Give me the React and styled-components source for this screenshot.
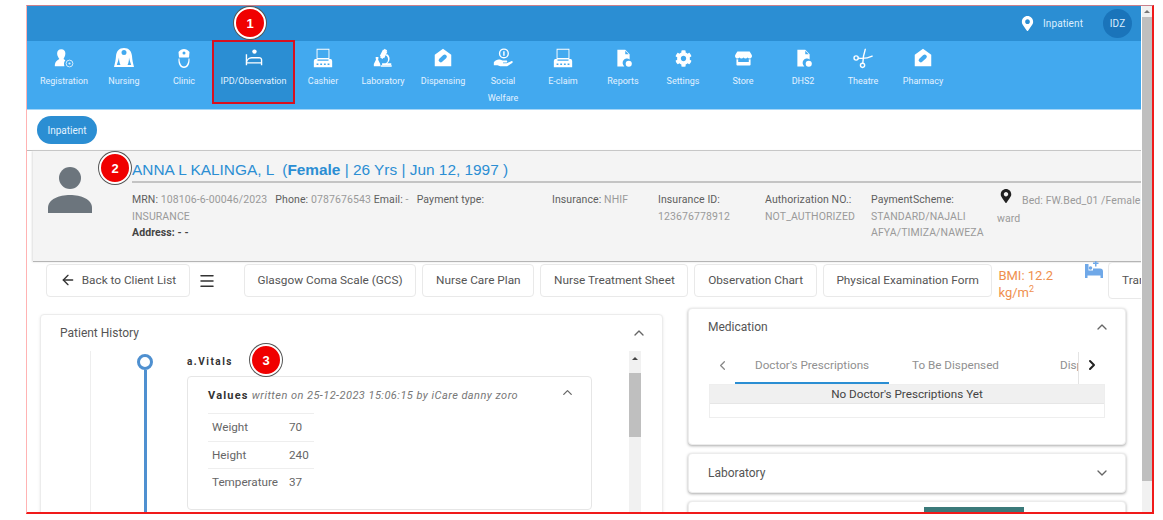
import React from "react";
import styled, { createGlobalStyle } from "styled-components";
import { ArrowLeft, ChevronDown, ChevronLeft, ChevronRight, ChevronUp, Menu } from "lucide-react";
import { FaCog, FaMapMarkerAlt, FaStore } from "react-icons/fa";

const GlobalStyle = createGlobalStyle`
  html, body {
    margin: 0;
    background: #fff;
    overflow: hidden;
  }
  * {
    box-sizing: border-box;
  }
`;

const Frame = styled.div`
  position: relative;
  width: 1128px;
  height: 509px;
  margin: 5px 0 0 26px;
  display: flex;
  overflow: hidden;
  border-top: 1px solid #c9808c;
  border-left: 1px solid #ffb3b3;
  border-right: 2px solid #f01a1a;
  border-bottom: 2px solid #f01a1a;
  font-family: Roboto, "Liberation Sans", sans-serif;
`;

const Main = styled.div`
  width: 1114px;
  flex-shrink: 0;
  overflow: hidden;
`;

const PageScroll = styled.div`
  width: 11px;
  margin-left: 1px;
  background: #f1f1f1;
  display: flex;
  flex-direction: column;
  align-items: center;
`;

const ScrollArrow = styled.div`
  width: 0;
  height: 0;
  margin: 4px 0;
  border-left: 3px solid transparent;
  border-right: 3px solid transparent;
  border-bottom: 3px solid #777;
`;

const ScrollThumb = styled.div`
  width: 100%;
  height: ${(p) => p.$height}px;
  background: #bfbfbf;
`;

const TopBar = styled.div`
  height: 35px;
  background: #2b8ed3;
  display: flex;
  align-items: center;
  justify-content: flex-end;
  padding-right: 9px;
  color: #dbeeff;
  font-size: 10px;
  letter-spacing: 0.1px;
`;

const TopPin = styled.span`
  display: flex;
  color: #fff;
  font-size: 15px;
  margin-right: 8px;
`;

const AvatarChip = styled.div`
  width: 29px;
  height: 29px;
  margin-left: 20px;
  border-radius: 50%;
  background: #1a74ba;
  display: flex;
  align-items: center;
  justify-content: center;
`;

const Nav = styled.div`
  height: 69px;
  background: #42a9ef;
  border-bottom: 1px solid #a5d6f7;
  display: flex;
  padding-left: 7px;
`;

const NavItem = styled.div`
  position: relative;
  width: ${(p) => (p.$active ? 79 : 60)}px;
  height: ${(p) => (p.$active ? 60 : 68)}px;
  margin-top: ${(p) => (p.$active ? 1 : 0)}px;
  padding: ${(p) => (p.$active ? "5px 2px 0" : "6px 6px 0")};
  background: ${(p) => (p.$active ? "#2b8ed3" : "transparent")};
  outline: ${(p) => (p.$active ? "2px solid #d8101f" : "none")};
  display: flex;
  flex-direction: column;
  align-items: center;
  color: #fff;
`;

const NavIcon = styled.div`
  height: 22px;
  display: flex;
  align-items: center;
  justify-content: center;
  font-size: 17px;
`;

const NavLabel = styled.div`
  margin-top: 4px;
  font-size: 9px;
  line-height: 17px;
  text-align: center;
  color: #e2f2ff;
  white-space: ${(p) => (p.$wrap ? "normal" : "nowrap")};
`;

const SubBar = styled.div`
  height: 40px;
  padding: 6px 0 0 10px;
`;

const Pill = styled.div`
  width: 60px;
  height: 28px;
  border-radius: 14px;
  background: #2b8ed3;
  color: #e2f2ff;
  font-size: 10px;
  display: flex;
  align-items: center;
  justify-content: center;
`;

const PatientSection = styled.div`
  border-top: 1px solid #bdbdbd;
  padding-left: 6px;
`;

const PatientPanel = styled.div`
  height: 111px;
  background: #f4f4f4;
  border-bottom: 1px solid #b5b5b5;
  box-shadow: -1px 0 2px #ddd;
  display: flex;
`;

const AvatarSlot = styled.div`
  width: 99px;
  flex-shrink: 0;
  padding: 16px 0 0 14px;
  display: flex;
`;

const PatientBody = styled.div`
  flex: 1;
  min-width: 0;
`;

const PatientName = styled.div`
  height: 32px;
  border-bottom: 2px solid #c4c4c4;
  padding-top: 10px;
  font-family: "Liberation Sans", Arial, sans-serif;
  font-size: 15.4px;
  line-height: 18px;
  color: #2b8ed3;
  white-space: pre;
`;

const DetailGrid = styled.div`
  display: grid;
  grid-template-columns: 420px 106px 107px 106px 126px 160px;
  padding-top: 9px;
  font-size: 10.5px;
  letter-spacing: 0.1px;
  line-height: 16.5px;
  color: #9a9a9a;
`;

const DetailCell = styled.div`
  max-width: ${(p) => p.$max || "none"};
`;

const Label = styled.span`
  color: #5e5e5e;
`;

const StrongLabel = styled.div`
  color: #444;
  font-weight: 700;
`;

const BedPin = styled.span`
  display: inline-flex;
  color: #222;
  font-size: 14px;
  margin: 0 9px 0 2px;
  vertical-align: 1px;
`;

const BedText = styled.div`
  line-height: 18px;
  margin-top: -3px;
  width: 155px;
`;

const Toolbar = styled.div`
  height: 36px;
  padding: 2px 0 0 19px;
  display: flex;
  align-items: flex-start;
  white-space: nowrap;
`;

const ToolButton = styled.div`
  height: ${(p) => (p.$tall ? 37 : 33)}px;
  flex-shrink: 0;
  margin-top: ${(p) => (p.$tall ? -2 : 0)}px;
  margin-right: ${(p) => p.$gap ?? 6}px;
  padding: 0 12.7px 1px;
  background: #fff;
  border: 1px solid #e9e9e9;
  border-radius: 4px;
  display: flex;
  align-items: center;
  gap: 6px;
  font-size: 11.8px;
  color: #555;
`;

const MenuSlot = styled.div`
  width: 54px;
  height: 33px;
  flex-shrink: 0;
  padding-left: 8px;
  display: flex;
  align-items: center;
  color: #333;
`;

const Bmi = styled.div`
  width: 86px;
  flex-shrink: 0;
  margin-top: 3px;
  font-size: 13px;
  line-height: 17px;
  color: #ef8f4e;
`;

const BedPlus = styled.div`
  width: 24px;
  flex-shrink: 0;
  margin-top: -3px;
  display: flex;
`;

const Columns = styled.div`
  display: flex;
  gap: 25px;
  padding: 10px 0 0 13px;
  align-items: flex-start;
`;

const LeftCard = styled.div`
  width: 623px;
  height: 260px;
  margin-top: 6px;
  background: #fff;
  border: 1px solid #ececec;
  border-radius: 4px;
  box-shadow: 0 1px 3px #e6e6e6;
`;

const RightColumn = styled.div`
  width: 438px;
  display: flex;
  flex-direction: column;
  gap: 8px;
`;

const Card = styled.div`
  height: ${(p) => p.$height}px;
  background: #fff;
  border: 1px solid #ececec;
  border-radius: 4px;
  box-shadow: 0 1px 3px #aaa;
  overflow: hidden;
`;

const CardHead = styled.div`
  height: ${(p) => p.$height || 36}px;
  padding: 0 15px 0 19px;
  display: flex;
  align-items: center;
  justify-content: space-between;
  font-size: 12px;
  color: #555;
`;

const HistoryBody = styled.div`
  height: 223px;
  display: flex;
`;

const TimelineRail = styled.div`
  width: 97px;
  margin-left: 49px;
  flex-shrink: 0;
  border-left: 1px solid #eee;
  padding-left: 46px;
  display: flex;
  flex-direction: column;
`;

const RailDot = styled.div`
  width: 16px;
  height: 16px;
  margin-top: 3px;
  border: 3px solid #4f90d0;
  border-radius: 50%;
`;

const RailLine = styled.div`
  width: 3px;
  flex: 1;
  margin-left: 6.5px;
  background: #4f90d0;
`;

const HistoryContent = styled.div`
  width: 405px;
  flex-shrink: 0;
`;

const SectionTitle = styled.div`
  height: 25px;
  line-height: 21px;
  font-size: 10px;
  font-weight: 700;
  letter-spacing: 1.5px;
  color: #333;
`;

const ValuesCard = styled.div`
  height: 134px;
  border: 1px solid #e6e6e6;
  border-radius: 4px;
  padding: 0 16px 0 20px;
`;

const ValuesHead = styled.div`
  height: 36px;
  display: flex;
  align-items: center;
  justify-content: space-between;
  color: #777;
`;

const ValuesChevron = styled(ChevronUp)`
  margin-bottom: 6px;
`;

const ValuesText = styled.div`
  font-size: 11px;
  font-style: italic;
  letter-spacing: 0.45px;
  white-space: nowrap;
`;

const ValuesTitle = styled.b`
  font-style: normal;
  letter-spacing: 1.2px;
  color: #333;
`;

const VitalsTable = styled.div`
  width: 106px;
`;

const VitalRow = styled.div`
  height: 27.5px;
  border-top: 1px solid #eee;
  padding-left: 4px;
  display: grid;
  grid-template-columns: 77px auto;
  align-items: center;
  font-size: 11.7px;
  color: #666;
`;

const InnerScroll = styled.div`
  width: 12px;
  margin-left: 37px;
  background: #f1f1f1;
  display: flex;
  flex-direction: column;
  align-items: center;
`;

const InnerArrow = styled.div`
  width: 0;
  height: 0;
  margin: 6px 0 13px;
  border-left: 3px solid transparent;
  border-right: 3px solid transparent;
  border-bottom: 3px solid #444;
`;

const TabsRow = styled.div`
  height: 32px;
  margin: 8px 20px 0;
  display: flex;
  align-items: stretch;
`;

const TabArrow = styled.div`
  width: ${(p) => p.$width}px;
  flex-shrink: 0;
  padding-bottom: 6px;
  display: flex;
  align-items: center;
  justify-content: center;
  color: ${(p) => (p.$dark ? "#222" : "#888")};
`;

const TabViewport = styled.div`
  width: 344px;
  flex-shrink: 0;
  overflow: hidden;
  display: flex;
  gap: 3px;
  border-right: 1px solid #e4e4e4;
`;

const Tab = styled.div`
  width: ${(p) => p.$width}px;
  flex-shrink: 0;
  padding: 0 0 5px 20px;
  border-bottom: 2px solid ${(p) => (p.$active ? "#2b8ed3" : "transparent")};
  display: flex;
  align-items: center;
  font-size: 11.7px;
  color: #909090;
  white-space: nowrap;
`;

const EmptyTable = styled.div`
  margin: 0 20px;
  height: 34px;
  border: 1px solid #eee;
`;

const EmptyHeader = styled.div`
  height: 19px;
  background: #f0f0f0;
  border-bottom: 1px solid #e6e6e6;
  display: flex;
  align-items: center;
  justify-content: center;
  font-size: 11.7px;
  color: #444;
`;

const TealBlock = styled.div`
  width: 100px;
  height: 20px;
  margin: 5px 0 0 235px;
  background: #3b7a7a;
`;

const Badge = styled.div`
  position: absolute;
  left: ${(p) => p.$x - 16}px;
  top: ${(p) => p.$y - 16}px;
  width: 32px;
  height: 32px;
  border-radius: 50%;
  background: #f00000;
  border: 2px solid #fff;
  box-shadow: 0 0 0 1px #555;
  display: flex;
  align-items: center;
  justify-content: center;
  color: #fff;
  font-size: 13px;
  font-weight: 700;
  font-family: "Liberation Sans", Arial, sans-serif;
`;

const Glyph = ({ children, size = 20 }) => (
  <svg width={size} height={size} viewBox="0 0 24 24" fill="#fff" fillRule="evenodd">
    {children}
  </svg>
);

const RegistrationIcon = () => (
  <Glyph size={22}>
    <path d="M9 2.500c3 0 4.500 2 4.500 4.500S12 12 11.500 13c1 .5 1.500 1 2 1.500-1.500 1.500-2 4-1 6.500H2c0-4 1-6 5-8-1-1.500-2.500-3.500-2.500-6C4.500 4.500 6 2.500 9 2.500z" />
    <circle cx="18" cy="18" r="3.700" fill="none" stroke="#dff0fc" strokeWidth="1" />
    <circle cx="18" cy="18" r="1.200" fill="#dff0fc" />
  </Glyph>
);

const NurseIcon = () => (
  <Glyph size={24}>
    <path d="M12 2c5 0 7.500 3 8 8 .3 4 1 7.500 2 11H2c1-3.500 1.700-7 2-11 .5-5 3-8 8-8zM9.500 6.500a2.500 2.500 0 0 0 5 0 2.500 2.500 0 0 0-5 0zM7 11.500c-.5 3-1.500 5-2.200 7.500h3.700c-1-1.500-1.500-4.500-1.500-7.500zM17 11.500c0 3-.5 6-1.500 7.500h3.700c-.7-2.500-1.700-4.500-2.200-7.500z" />
  </Glyph>
);

const DoctorIcon = () => (
  <Glyph size={24}>
    <path d="M6.500 6c3-4 8-4 11 0l-.5 5.500H7zM10.500 7a1.500 1.500 0 0 0 3 0 1.500 1.500 0 0 0-3 0z" />
    <path d="M6.500 12.500h1c0 4.500 2 8 4.500 8s4.500-3.500 4.500-8h1c.5 5.500-1.500 9.500-5.500 9.500s-6-4-5.500-9.500z" />
  </Glyph>
);

const BedIcon = () => (
  <Glyph size={22}>
    <circle cx="12.500" cy="5" r="2.400" />
    <path d="M3 8h1.500v6c1-2 3-3 5-3h8c2 0 3.500 1.500 3.500 3v6h-1.500v-2h-15v2H3zM4.500 16.500h15V14c0-1-.7-1.500-2-1.500h-8c-3 0-4.500 1.500-5 4z" />
  </Glyph>
);

const PrinterIcon = () => (
  <Glyph size={22}>
    <path d="M5 2h14v1H6v9h12V3h1v10h2l1 2v7H2v-7l1-2h2zM5 18v1.500h2V18zM9 18v1.500h2V18zM13 18v1.500h2V18zM17 18v1.500h2V18zM6 13.500v1.500h12v-1.500z" />
  </Glyph>
);

const LabIcon = () => (
  <Glyph size={22}>
    <path d="M13.500 2l3 1.500-.7 1.300 1 .5-3.500 7-1-.5-.7 1.200-2.700-1.500.6-1.200-1-.5 3.500-7 1 .5z" />
    <path d="M16 7.500c3 1.500 4 5 2.500 8-.5 1-1.200 1.700-2 2.300H21V20H11v-2.200h2c2.500 0 4.500-1.500 4.500-4.300 0-2-1-3.500-2.500-4.200z" />
    <path d="M4 11h3v1l-.3 2L9 18.500V21H2v-2.500L4.300 14 4 12zM9.500 20h12v1.500h-12z" />
  </Glyph>
);

const PillHouseIcon = () => (
  <Glyph size={22}>
    <path d="M12 2l9 6.500V21H3V8.500zM12.300 8.800l-4.300 3.900a2.300 2.300 0 0 0 3.100 3.400l4.300-3.900a2.300 2.300 0 0 0-3.100-3.400z" />
  </Glyph>
);

const SocialIcon = () => (
  <Glyph size={22}>
    <path d="M13 1.500a5.500 5.500 0 1 1 0 11 5.500 5.500 0 0 1 0-11zM13 3a4 4 0 1 0 0 8 4 4 0 0 0 0-8zM12.200 4.500h1.600v5h-1.600z" />
    <path d="M2 16.500c2-2.500 5-3.500 7.500-2.500l2 .7h4c1.500 0 1.500 2.300 0 2.300h-3.500v.8h4l5-2.300c1.500-.5 2.300 1 1 2l-5.500 3.500H9L6 20H2z" />
  </Glyph>
);

const ReportIcon = () => (
  <Glyph size={21}>
    <path d="M5 2h9l5 5v6a5 5 0 0 0-6 8H5zM14 3v4h4z" />
    <circle cx="18" cy="18" r="3.500" />
  </Glyph>
);

const ScissorsIcon = () => (
  <svg width="22" height="22" viewBox="0 0 24 24" fill="none" stroke="#fff" strokeWidth="1.500" strokeLinecap="round">
    <circle cx="4.500" cy="12" r="2.300" />
    <circle cx="11.500" cy="20" r="2.300" />
    <path d="M7 12.200c5 .6 10 .2 15-2.200" />
    <path d="M11.800 17.500c.2-5 1-10 2.700-15" />
  </svg>
);

const BedPlusIcon = () => (
  <svg width="20" height="18" viewBox="0 0 20 18" fill="#6fa8e8">
    <path d="M1 3h3.500v6.500H9V7.500h7c2 0 3 1 3 3V17h-2.500v-2.500h-13V17H1z" />
    <circle cx="6.500" cy="7" r="1.800" />
    <path d="M9 1.500h2v-1.500h1.500v1.500h2V3h-2v2.500H11V3H9z" />
  </svg>
);

const PatientAvatar = () => (
  <svg width="46" height="46" viewBox="0 0 46 46" fill="#6c757d">
    <circle cx="23" cy="11" r="11" />
    <path d="M1 46v-5c0-9 11-13 22-13s22 4 22 13v5z" />
  </svg>
);

const navItems = [
  { label: "Registration", icon: <RegistrationIcon /> },
  { label: "Nursing", icon: <NurseIcon /> },
  { label: "Clinic", icon: <DoctorIcon /> },
  { label: "IPD/Observation", icon: <BedIcon />, active: true },
  { label: "Cashier", icon: <PrinterIcon /> },
  { label: "Laboratory", icon: <LabIcon /> },
  { label: "Dispensing", icon: <PillHouseIcon /> },
  { label: "Social Welfare", icon: <SocialIcon />, wrap: true },
  { label: "E-claim", icon: <PrinterIcon /> },
  { label: "Reports", icon: <ReportIcon /> },
  { label: "Settings", icon: <FaCog /> },
  { label: "Store", icon: <FaStore /> },
  { label: "DHS2", icon: <ReportIcon /> },
  { label: "Theatre", icon: <ScissorsIcon /> },
  { label: "Pharmacy", icon: <PillHouseIcon /> },
];

const vitals = [
  ["Weight", "70"],
  ["Height", "240"],
  ["Temperature", "37"],
];

const App = () => {
  return (
    <>
      <GlobalStyle />
      <Frame>
        <Main>
          <TopBar>
            <TopPin>
              <FaMapMarkerAlt />
            </TopPin>
            Inpatient
            <AvatarChip>IDZ</AvatarChip>
          </TopBar>
          <Nav>
            {navItems.map((item) => (
              <NavItem key={item.label} $active={item.active}>
                <NavIcon>{item.icon}</NavIcon>
                <NavLabel $wrap={item.wrap}>{item.label}</NavLabel>
              </NavItem>
            ))}
          </Nav>
          <SubBar>
            <Pill>Inpatient</Pill>
          </SubBar>
          <PatientSection>
            <PatientPanel>
              <AvatarSlot>
                <PatientAvatar />
              </AvatarSlot>
              <PatientBody>
                <PatientName>
                  {"ANNA L KALINGA, L  ("}
                  <b>Female</b>
                  {" | 26 Yrs | Jun 12, 1997 )"}
                </PatientName>
                <DetailGrid>
                  <DetailCell $max="376px">
                    <Label>MRN:</Label> 108106-6-00046/2023 &nbsp; <Label>Phone:</Label> 0787676543{" "}
                    <Label>Email:</Label> - &nbsp; <Label>Payment type:</Label> INSURANCE
                    <StrongLabel>Address: - -</StrongLabel>
                  </DetailCell>
                  <DetailCell>
                    <Label>Insurance:</Label> NHIF
                  </DetailCell>
                  <DetailCell>
                    <Label>Insurance ID:</Label>
                    <br />
                    123676778912
                  </DetailCell>
                  <DetailCell>
                    <Label>Authorization NO.:</Label>
                    <br />
                    NOT_AUTHORIZED
                  </DetailCell>
                  <DetailCell>
                    <Label>PaymentScheme:</Label>
                    <br />
                    STANDARD/NAJALI AFYA/TIMIZA/NAWEZA
                  </DetailCell>
                  <DetailCell>
                    <BedText>
                      <BedPin>
                        <FaMapMarkerAlt />
                      </BedPin>
                      Bed: FW.Bed_01 /Female ward
                    </BedText>
                  </DetailCell>
                </DetailGrid>
              </PatientBody>
            </PatientPanel>
          </PatientSection>
          <Toolbar>
            <ToolButton $gap={0}>
              <ArrowLeft size={16} color="#333" />
              Back to Client List
            </ToolButton>
            <MenuSlot>
              <Menu size={18} />
            </MenuSlot>
            <ToolButton>Glasgow Coma Scale (GCS)</ToolButton>
            <ToolButton>Nurse Care Plan</ToolButton>
            <ToolButton>Nurse Treatment Sheet</ToolButton>
            <ToolButton>Observation Chart</ToolButton>
            <ToolButton>Physical Examination Form</ToolButton>
            <Bmi>
              BMI: 12.2
              <br />
              kg/m<sup style={{ fontSize: 9, lineHeight: 0 }}>2</sup>
            </Bmi>
            <BedPlus>
              <BedPlusIcon />
            </BedPlus>
            <ToolButton $tall>Transfer</ToolButton>
          </Toolbar>
          <Columns>
            <LeftCard>
              <CardHead>
                Patient History
                <ChevronUp size={16} color="#666" />
              </CardHead>
              <HistoryBody>
                <TimelineRail>
                  <RailDot />
                  <RailLine />
                </TimelineRail>
                <HistoryContent>
                  <SectionTitle>a.Vitals</SectionTitle>
                  <ValuesCard>
                    <ValuesHead>
                      <ValuesText>
                        <ValuesTitle>Values</ValuesTitle> written on 25-12-2023 15:06:15 by iCare danny zoro
                      </ValuesText>
                      <ValuesChevron size={15} color="#666" />
                    </ValuesHead>
                    <VitalsTable>
                      {vitals.map(([name, value]) => (
                        <VitalRow key={name}>
                          <span>{name}</span>
                          <span>{value}</span>
                        </VitalRow>
                      ))}
                    </VitalsTable>
                  </ValuesCard>
                </HistoryContent>
                <InnerScroll>
                  <InnerArrow />
                  <ScrollThumb $height={64} />
                </InnerScroll>
              </HistoryBody>
            </LeftCard>
            <RightColumn>
              <Card $height={137}>
                <CardHead $height={35}>
                  Medication
                  <ChevronUp size={16} color="#666" />
                </CardHead>
                <TabsRow>
                  <TabArrow $width={26}>
                    <ChevronLeft size={15} />
                  </TabArrow>
                  <TabViewport>
                    <Tab $width={154} $active>
                      Doctor's Prescriptions
                    </Tab>
                    <Tab $width={145}>To Be Dispensed</Tab>
                    <Tab $width={100}>Dispensed</Tab>
                  </TabViewport>
                  <TabArrow $width={26} $dark>
                    <ChevronRight size={16} strokeWidth={3} />
                  </TabArrow>
                </TabsRow>
                <EmptyTable>
                  <EmptyHeader>No Doctor's Prescriptions Yet</EmptyHeader>
                </EmptyTable>
              </Card>
              <Card $height={40}>
                <CardHead $height={38}>
                  Laboratory
                  <ChevronDown size={16} color="#666" />
                </CardHead>
              </Card>
              <Card $height={40}>
                <TealBlock />
              </Card>
            </RightColumn>
          </Columns>
        </Main>
        <PageScroll>
          <ScrollArrow />
          <ScrollThumb $height={464} />
        </PageScroll>
        <Badge $x={223} $y={17}>1</Badge>
        <Badge $x={88} $y={162}>2</Badge>
        <Badge $x={239} $y={354}>3</Badge>
      </Frame>
    </>
  );
};

export default App;
